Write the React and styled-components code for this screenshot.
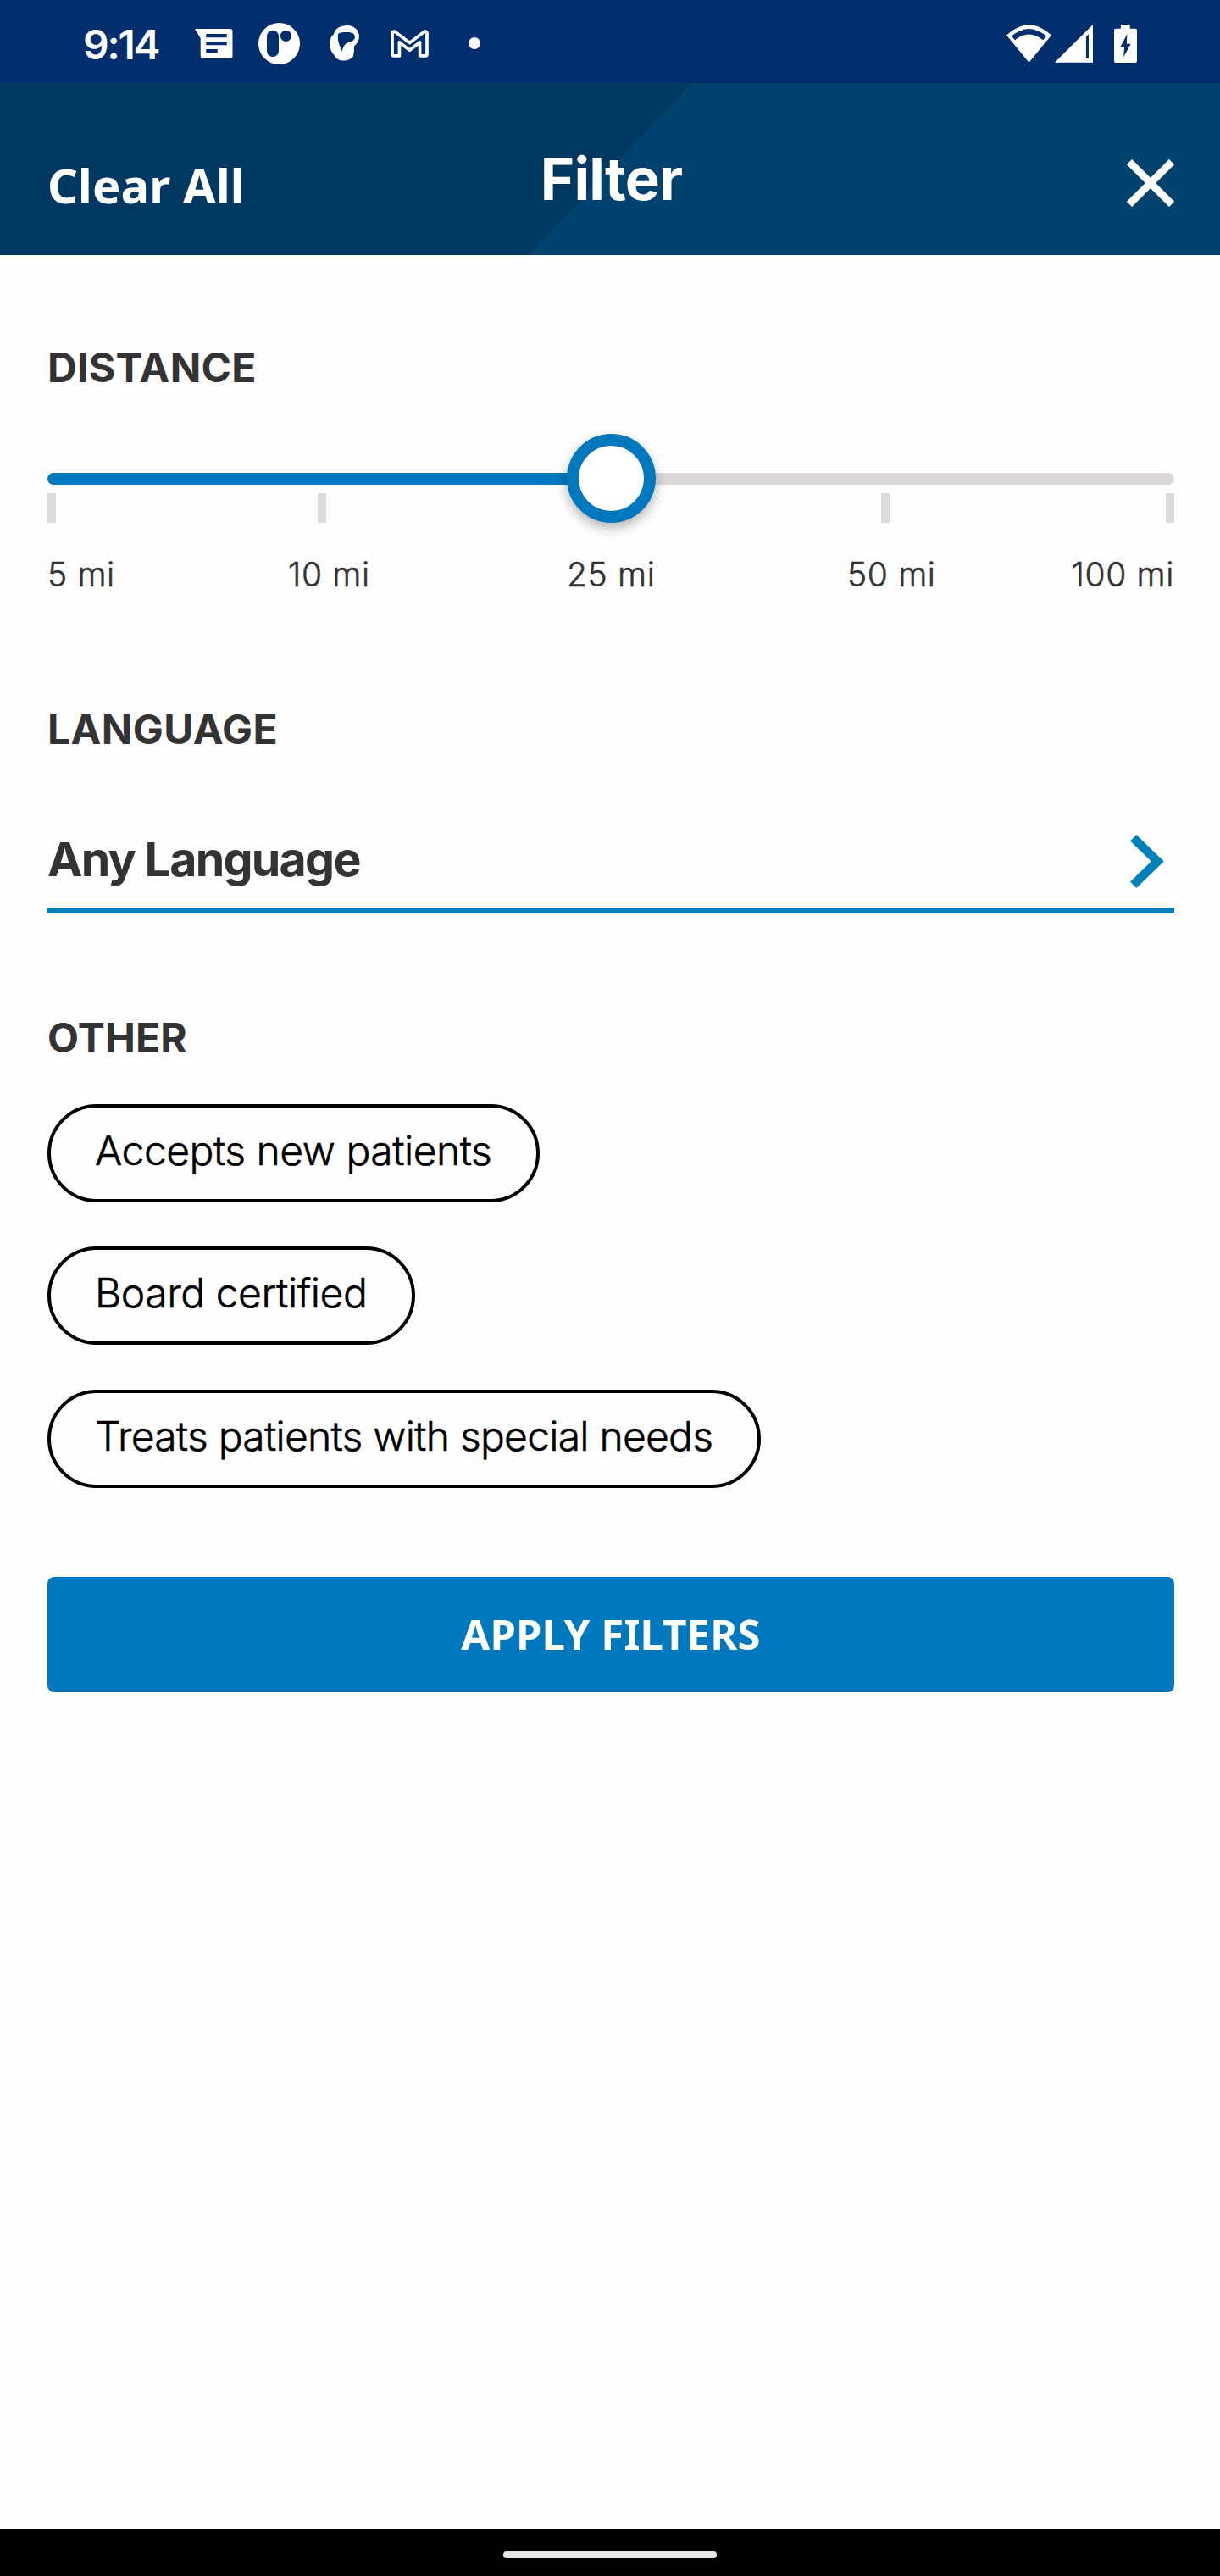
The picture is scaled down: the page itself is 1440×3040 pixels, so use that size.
import React from 'react';
import styled, { createGlobalStyle } from 'styled-components';

const GlobalStyle = createGlobalStyle`
  *, *::before, *::after { box-sizing: border-box; }
  body { margin: 0; background: #fefefe; }
  button { margin: 0; border: 0; background: none; cursor: pointer; }
  svg { display: block; flex: none; }
`;

const grotesk = 'Inter, sans-serif';
const system = '"Noto Sans", sans-serif';

const Screen = styled.div`
  display: flex;
  flex-direction: column;
  width: 1440px;
  min-height: 3040px;
  background: #fefefe;
`;

const StatusBar = styled.div`
  display: flex;
  align-items: center;
  justify-content: space-between;
  height: 98px;
  padding: 4px 98px 0 98px;
  background: #002d6c;
  color: #fff;
`;

const StatusGroup = styled.div`
  display: flex;
  align-items: center;
`;

const Time = styled.span`
  width: 132px;
  padding-top: 3px;
  font: 600 48px/58px ${grotesk};
  letter-spacing: -2.3px;
`;

const StatusIcon = styled.svg`
  width: ${(p) => p.$w}px;
  height: ${(p) => p.$h}px;
  margin-left: ${(p) => p.$gap || 0}px;
  fill: currentColor;
`;

const Dot = styled.span`
  width: 14px;
  height: 14px;
  margin-left: 47px;
  border-radius: 50%;
  background: currentColor;
`;

const Header = styled.header`
  display: grid;
  grid-template-columns: 1fr auto 1fr;
  align-items: center;
  height: 203px;
  padding: 0 54px 0 56px;
  background: linear-gradient(133.55deg, #003862 50%, #00426e 50%);
  color: #fff;
`;

const ClearButton = styled.button`
  justify-self: start;
  padding: 37px 0 0;
  color: inherit;
  font: 700 56px/76px ${system};
  letter-spacing: 0.15px;
`;

const HeaderTitle = styled.h1`
  margin: 0;
  padding: 23px 0 0 1px;
  font: 700 69px/84px ${grotesk};
  letter-spacing: -0.9px;
`;

const CloseButton = styled.button`
  justify-self: end;
  padding: 32px 0 0;
  color: inherit;
`;

const Content = styled.main`
  display: flex;
  flex-direction: column;
  padding: 104px 54px 0 56px;
`;

const SectionTitle = styled.h2`
  margin: ${(p) => p.$top || 0}px 0 0;
  color: #333;
  font: 700 48px/58px ${grotesk};
  letter-spacing: ${(p) => p.$spacing || 0}px;
`;

const Slider = styled.div`
  display: grid;
  height: 105px;
  margin-top: 49px;
  > * { grid-area: 1 / 1; }
`;

const Track = styled.div`
  align-self: center;
  height: 14px;
  border-radius: 7px;
  background: linear-gradient(90deg, #0078be 50%, #dad8d9 50%);
`;

const Ticks = styled.div`
  display: flex;
  align-self: end;
`;

const Tick = styled.span`
  width: 10px;
  height: 35px;
  margin-left: ${(p) => p.$gap}px;
  background: #dbdadc;
`;

const Thumb = styled.div`
  z-index: 1;
  justify-self: center;
  width: 105px;
  height: 105px;
  border: 14px solid #0078be;
  border-radius: 50%;
  background: #fff;
  box-shadow: 0 6px 14px rgba(0, 0, 0, 0.3);
`;

const Labels = styled.div`
  display: grid;
  grid-template-columns: 284px 329px 331px 1fr auto;
  margin-top: 38px;
  color: #333;
  font: 300 39px/46px ${grotesk};
  letter-spacing: 0.65px;
  -webkit-text-stroke: 0.5px currentColor;
`;

const Select = styled.button`
  display: flex;
  align-items: center;
  justify-content: space-between;
  height: 127px;
  margin-top: 61px;
  padding: 5px 12px 0 0;
  border-bottom: 7px solid #0080b8;
  color: #333;
  font: 700 55.5px/68px ${grotesk};
  letter-spacing: -1.75px;
`;

const Chevron = styled.svg`
  width: 40px;
  height: 63px;
  margin-top: 5px;
`;

const Chips = styled.div`
  display: flex;
  flex-direction: column;
  align-items: flex-start;
  gap: 52.4px;
  margin-top: 49px;
`;

const Chip = styled.button`
  height: 116px;
  padding: 0 53px 6px 52px;
  border: 4px solid #000;
  border-radius: 58px;
  color: #000;
  font: 300 48px/58px ${grotesk};
  letter-spacing: ${(p) => p.$spacing}px;
  -webkit-text-stroke: 0.5px currentColor;
`;

const ApplyButton = styled.button`
  height: 136px;
  margin-top: 105.2px;
  padding: 0 0 2px;
  border-radius: 8px;
  background: #0078be;
  color: #fff;
  font: 700 49px/66px ${system};
  letter-spacing: 0.15px;
`;

const NavigationBar = styled.div`
  display: flex;
  align-items: center;
  justify-content: center;
  height: 56px;
  margin-top: auto;
  padding-top: 5px;
  background: #000;
`;

const HomeIndicator = styled.span`
  width: 252px;
  height: 8px;
  border-radius: 4px;
  background: #e8e4e6;
`;

const tickGaps = [0, 309, 331, 314, 326];
const distances = ['5 mi', '10 mi', '25 mi', '50 mi', '100 mi'];
const options = [
  { label: 'Accepts new patients', spacing: -0.5 },
  { label: 'Board certified', spacing: -0.44 },
  { label: 'Treats patients with special needs', spacing: -0.76 },
];

export default function App() {
  return (
    <>
      <GlobalStyle />
      <Screen>
        <StatusBar>
          <StatusGroup>
            <Time>9:14</Time>
            <StatusIcon $w={44.5} $h={35} viewBox="0 0 44.5 35">
              <path fillRule="evenodd" d="M0 0H41.5Q44.5 0 44.5 3V32Q44.5 35 41.5 35H9.7Q6.7 35 6.7 32V11ZM13.3 6V10.2H37.7V6ZM13.3 15V19.2H37.7V15ZM13.3 24V28.3H26.7V24Z" />
            </StatusIcon>
            <StatusIcon $w={49} $h={49} $gap={30.5} viewBox="0 0 49 49">
              <path fillRule="evenodd" d="M24.5 0a24.5 24.5 0 1 0 0 49a24.5 24.5 0 1 0 0-49ZM17 8.7a7 7 0 0 1 7 7V33a7 7 0 0 1-14 0V15.700a7 7 0 0 1 7-7ZM32.500 8.700a6.600 6.600 0 1 1 0 13.200a6.600 6.600 0 1 1 0-13.200Z" />
            </StatusIcon>
            <StatusIcon $w={35} $h={41.5} $gap={34.5} viewBox="0 0 104 124">
              <path fillRule="evenodd" d="M62 0C86 0 104 17 104 38C104 54 98 63 88 71C84 77 87 82 86 92L83 110C74 119 64 124 50 124C34 124 24 118 17 106C6 94 0 80 0 64C0 50 5 38 14 31C20 10 38 0 62 0ZM30 30C28 42 29 54 33 64L42 92C47 84 47 72 58 64C70 56 88 58 89 42C90 28 77 24 62 24C48 24 36 24 30 30Z" />
            </StatusIcon>
            <StatusIcon $w={45} $h={33} $gap={37} viewBox="0 0 134 98">
              <path fill="none" stroke="currentColor" strokeWidth="11" strokeLinejoin="round" d="M6 87V13Q6 6 14 6L67 46L120 6Q128 6 128 13V87Q128 92 123 92H103V44L67 72L31 44V92H11Q6 92 6 87Z" />
            </StatusIcon>
            <Dot />
          </StatusGroup>
          <StatusGroup>
            <StatusIcon $w={53} $h={45} viewBox="0 0 160 134">
              <path fillRule="evenodd" d="M0 37Q80 -37 160 37L80 134ZM18 40L30 54Q80 14 130 54L142 40Q80 -12 18 40Z" />
            </StatusIcon>
            <StatusIcon $w={45} $h={45} $gap={4.5} viewBox="0 0 134 134">
              <path fillRule="evenodd" d="M0 133L134 0V133ZM110 43V118H119V33Z" />
            </StatusIcon>
            <StatusIcon $w={27} $h={45} $gap={25} viewBox="0 0 82 136">
              <path fillRule="evenodd" d="M24 0H57V14H76Q82 14 82 20V130Q82 136 76 136H6Q0 136 0 130V20Q0 14 6 14H24ZM47 34L22 80H37L34 116L60 69H45Z" />
            </StatusIcon>
          </StatusGroup>
        </StatusBar>

        <Header>
          <ClearButton>Clear All</ClearButton>
          <HeaderTitle>Filter</HeaderTitle>
          <CloseButton aria-label="Close">
            <svg width="56" height="56" viewBox="0 0 168 168" fill="none" stroke="currentColor" strokeWidth="26">
              <path d="M9 9L159 159M159 9L9 159" />
            </svg>
          </CloseButton>
        </Header>

        <Content>
          <SectionTitle $spacing={0.3}>DISTANCE</SectionTitle>
          <Slider>
            <Track />
            <Ticks>
              {tickGaps.map((gap, i) => <Tick key={i} $gap={gap} />)}
            </Ticks>
            <Thumb />
          </Slider>
          <Labels>
            {distances.map((d) => <span key={d}>{d}</span>)}
          </Labels>

          <SectionTitle $top={131} $spacing={0.4}>LANGUAGE</SectionTitle>
          <Select>
            Any Language
            <Chevron viewBox="0 0 120 188" fill="none" stroke="#0080b8" strokeWidth="31">
              <path d="M11 11L97 94L11 177" />
            </Chevron>
          </Select>

          <SectionTitle $top={118} $spacing={0.2}>OTHER</SectionTitle>
          <Chips>
            {options.map(({ label, spacing }) => (
              <Chip key={label} $spacing={spacing}>{label}</Chip>
            ))}
          </Chips>
          <ApplyButton>APPLY FILTERS</ApplyButton>
        </Content>

        <NavigationBar>
          <HomeIndicator />
        </NavigationBar>
      </Screen>
    </>
  );
}
